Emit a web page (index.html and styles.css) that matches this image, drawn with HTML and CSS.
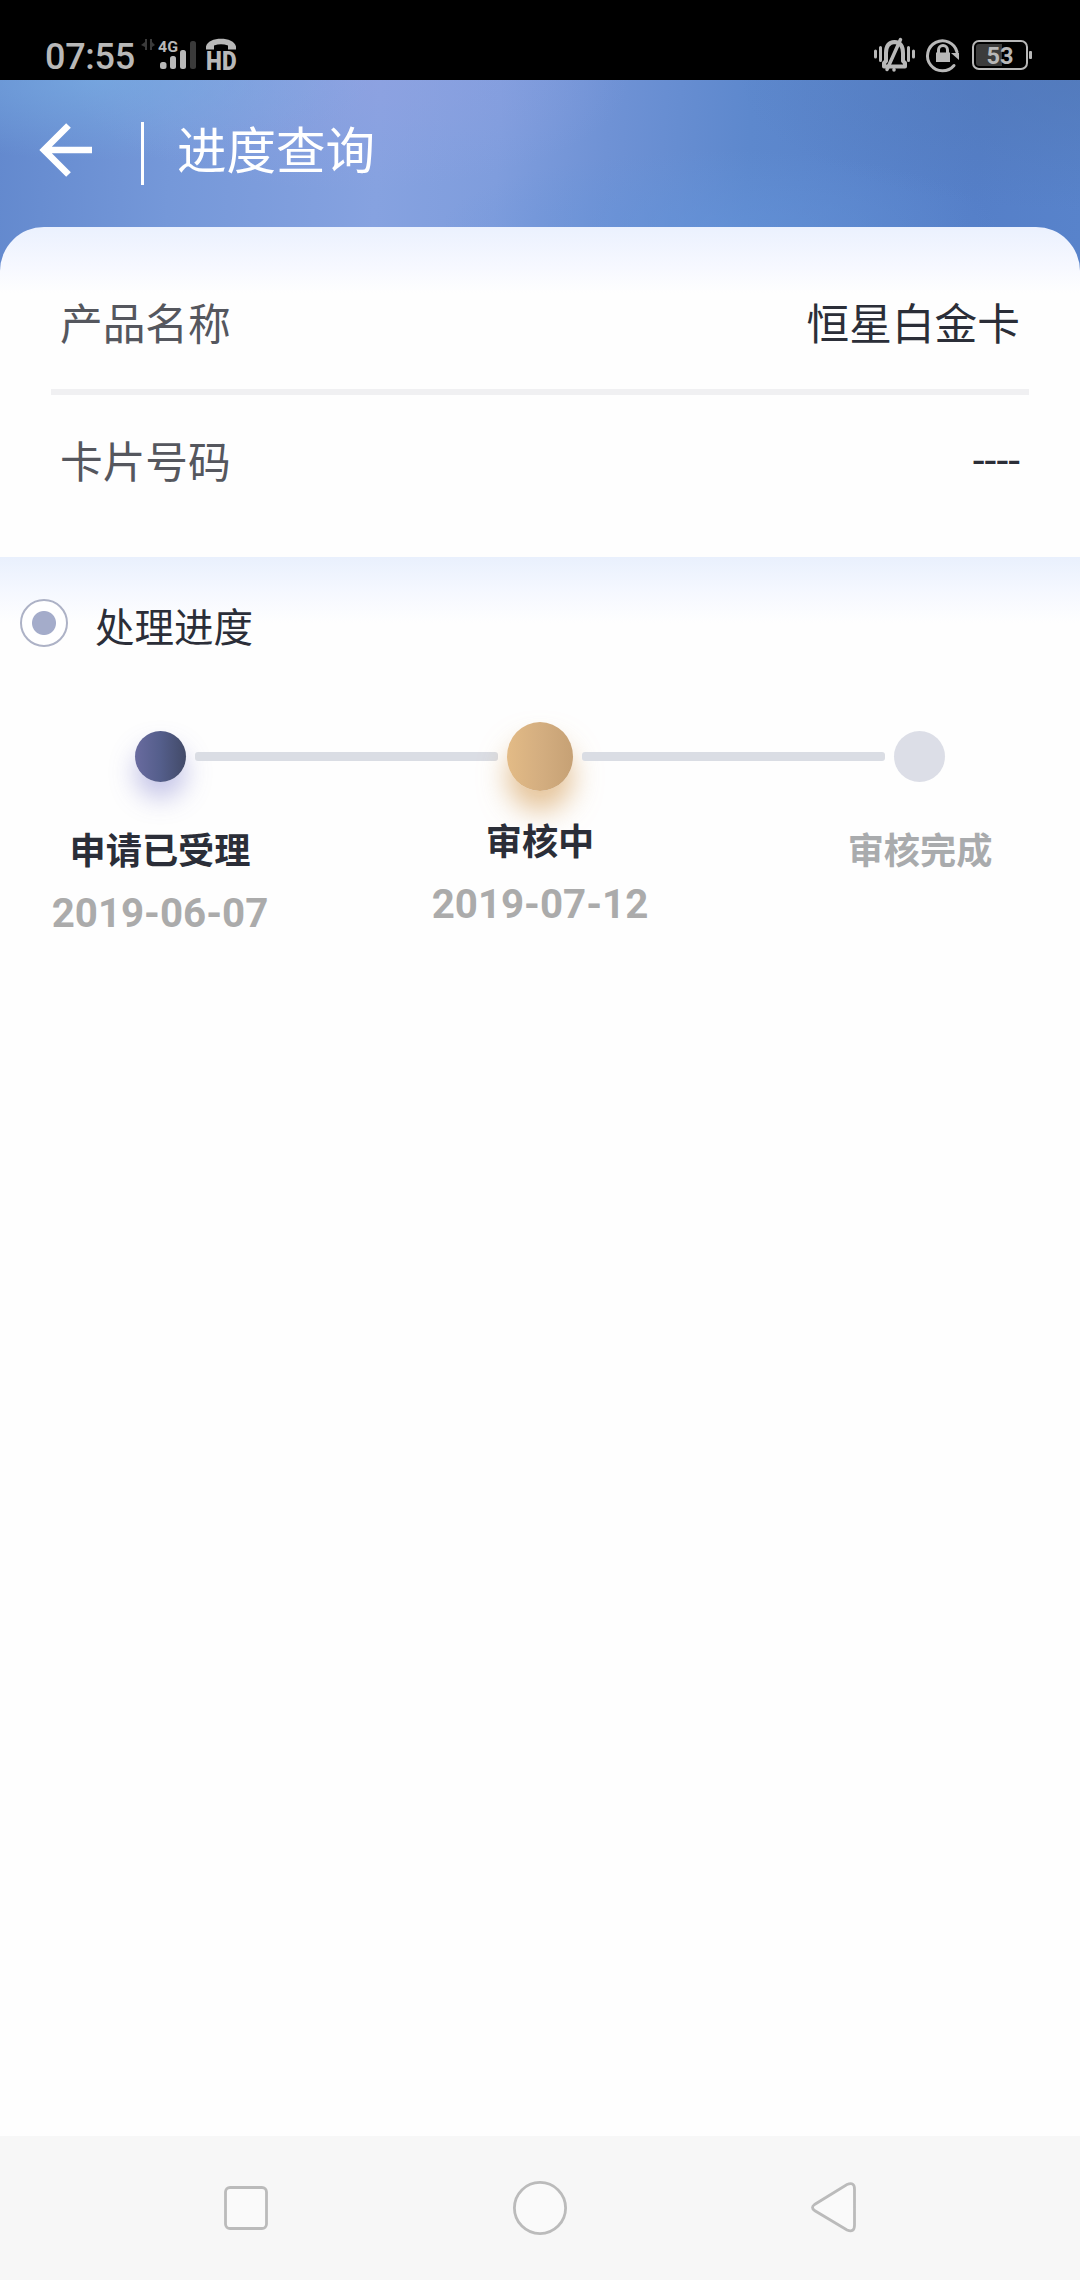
FILE: index.html
```html
<!DOCTYPE html>
<html lang="zh-CN">
<head>
<meta charset="utf-8">
<title>进度查询</title>
<link rel="stylesheet" href="styles.css">
</head>
<body>
<div class="screen">
  <div class="status">
    <span class="clock">07:55</span>
    <svg class="signal" width="104" height="40" viewBox="138 35 104 40">
      <path d="M147 39v11h-2v-3l-4-2 4-3v-3zM150 39h2v3l3 3-3 2v3h-2z" fill="#3a3a3a"/>
      <text x="158" y="51.500" class="net" textLength="20" lengthAdjust="spacingAndGlyphs">4G</text>
      <rect x="160" y="62" width="6.500" height="7" rx="2.500"/>
      <rect x="170" y="56" width="6" height="13" rx="2.500"/>
      <rect x="180" y="50" width="6" height="19" rx="2.500"/>
      <rect x="190" y="41" width="6" height="28" rx="2.500" fill="#3a3a3a"/>
      <path d="M206 49.500v-3c2-10.500 28-10.500 30 0v3h-8v-4q-7-2.500-14 0v4z"/>
      <text x="206" y="70" class="hd" textLength="30.500" lengthAdjust="spacingAndGlyphs">HD</text>
    </svg>
    <svg class="system" width="164" height="44" viewBox="870 34 164 44">
      <g fill="none" stroke="#b8b8b8" stroke-width="3" stroke-linecap="round">
        <path d="M875.500 51v6M880.500 47.500v13M908.500 47.500v13M913.500 51v6"/>
        <path d="M884 66.500v-3.500l2-2v-8q0-10.500 8.500-11Q903 42.500 903 53v8l2 2v3.500z" stroke-width="4" stroke-linejoin="round"/>
        <path d="M887 69.500L900.500 39.500M894 69.500v.5" stroke-width="3.500"/>
        <path d="M957 52A15 15 0 1 0 954 65.500"/>
      </g>
      <path d="M951 53h8v7zM936 52.500h14v9.500h-14z"/>
      <path d="M938.500 53v-3a4.500 4.500 0 0 1 9 0v3" fill="none" stroke="#b8b8b8" stroke-width="3"/>
      <rect x="973" y="41" width="54" height="28" rx="6" fill="none" stroke="#b8b8b8" stroke-width="2"/>
      <path d="M979 44h23v22h-23q-3 0-3-3v-16q0-3 3-3z" fill="#3c3c3c"/>
      <rect x="1029" y="51" width="3" height="8" rx="1"/>
      <text x="986.500" y="64.300" class="charge" textLength="27" lengthAdjust="spacingAndGlyphs">53</text>
    </svg>
  </div>

  <header class="header">
    <svg class="back" width="54" height="56" viewBox="39 122 54 56">
      <path d="M92 150H44M68.500 125.500L44 150L68.500 174.500" fill="none" stroke="#fff" stroke-width="6.600"/>
    </svg>
    <span class="separator"></span>
    <h1 class="title">进度查询</h1>
  </header>

  <section class="card">
    <div class="row"><span>产品名称</span><span class="value">恒星白金卡</span></div>
    <div class="row"><span>卡片号码</span><span class="value empty">----</span></div>
  </section>

  <main class="progress">
    <h2 class="heading"><span class="bullet"></span><span class="caption">处理进度</span></h2>
    <div class="steps">
      <div class="track">
        <span class="dot done"></span>
        <span class="line"></span>
        <span class="dot current"></span>
        <span class="line"></span>
        <span class="dot"></span>
      </div>
      <div class="labels">
        <div class="step"><b>申请已受理</b><time>2019-06-07</time></div>
        <div class="step active"><b>审核中</b><time>2019-07-12</time></div>
        <div class="step pending"><b>审核完成</b></div>
      </div>
    </div>
  </main>

  <nav class="nav">
    <svg width="60" height="60" viewBox="-30 -30 60 60"><rect x="-20.500" y="-20.500" width="41" height="41" rx="4.500"/></svg>
    <svg width="60" height="60" viewBox="-30 -30 60 60"><circle r="25.600"/></svg>
    <svg width="60" height="60" viewBox="804 2178 60 60"><path d="M814.500 2204.500L847 2184.500q7.500-3 7.500 4.500v36q0 8-7.500 5L814.500 2210.500q-4-3 0-6z"/></svg>
  </nav>
</div>
</body>
</html>
```
FILE: styles.css
```css
* { box-sizing: border-box; }

body {
  margin: 0;
  background: #fefefe;
  color: #2b2e38;
  font-family: Roboto, "Noto Sans CJK SC", sans-serif;
}

.screen {
  display: flex;
  flex-direction: column;
  width: 1080px;
  height: 2280px;
}

/* System status bar */
.status {
  display: flex;
  align-items: flex-start;
  height: 80px;
  padding: 34px 46px 0 45px;
  background: #000;
  color: #b8b8b8;
}

.status svg { fill: #b8b8b8; flex: none; }
.clock { width: 93px; padding-top: 1px; font-size: 36px; font-weight: 500; line-height: 45px; letter-spacing: -0.3px; }
.signal { margin-top: 1px; }
.system { margin-left: auto; }
.net { font-size: 15px; font-weight: 700; }
.hd { font-size: 26px; font-weight: 900; }
.charge { font-size: 24px; font-weight: 700; }

/* Blue header, continues behind the rounded card corners */
.header {
  display: flex;
  align-items: flex-start;
  height: 191px;
  padding: 42px 39px 0;
  background:
    radial-gradient(ellipse 270px 80px at 100px 0, rgba(120, 172, 226, .7), transparent),
    radial-gradient(ellipse 280px 110px at 350px 0, rgba(146, 162, 226, .6), transparent),
    radial-gradient(ellipse 280px 80px at 720px 150px, rgba(101, 148, 218, .6), transparent),
    radial-gradient(ellipse 340px 130px at 1080px 0, rgba(80, 118, 180, .6), transparent),
    linear-gradient(93deg, #6389ce 0, #7598d9 16%, #86a2e0 35%, #7f9ddd 46%, #6f92d5 56%, #5d88cd 69%, #557fc8 90%, #5883cb 100%);
  color: #fff;
}

.separator { width: 3px; height: 63px; margin-left: 48px; background: #fff; }
.title { margin: -6px 0 0 33px; font-size: 49.500px; font-weight: 400; line-height: 72px; }

/* Card details */
.card {
  height: 330px;
  margin-top: -44px;
  padding: 30px 51px 0;
  border-radius: 44px 44px 0 0;
  background: linear-gradient(#ebf1fe, #f6f8ff 38px, #fefefe 66px);
}

.row {
  display: flex;
  justify-content: space-between;
  height: 132px;
  padding: 2px 9px 0;
  color: #55575e;
  font-size: 42.700px;
  line-height: 132px;
}

.row + .row { height: 138px; border-top: 6px solid #f0f0f2; }
.value { color: #2b2e38; }
.value.empty { line-height: 126px; }

/* Processing progress */
.progress {
  flex: 1;
  background: linear-gradient(#e9f0fd, #f5f8ff 34px, #fefefe 66px);
}

.heading {
  display: flex;
  align-items: center;
  gap: 27px;
  height: 60px;
  margin: 0;
  padding: 0 20px;
  margin-top: 40px;
  font-size: 39.500px;
  font-weight: 400;
}

.caption { padding-bottom: 6px; }

.bullet {
  width: 48px;
  height: 48px;
  margin-top: -8px;
  border: 2px solid #adb2c6;
  border-radius: 50%;
  background: radial-gradient(circle, #a4acca 11.500px, #fff 12.500px);
}

.steps { padding-top: 65px; }
.track { display: flex; align-items: center; gap: 9px; height: 69px; padding: 0 135px; }

.dot { flex: none; width: 51px; height: 51px; border-radius: 50%; background: #dcdee7; }
.dot.done { background: linear-gradient(90deg, #696b9f, #545e8b 50%, #424a68); box-shadow: 0 16px 26px rgba(92, 92, 190, .36); }
.dot.current { width: 66px; height: 69px; background: linear-gradient(90deg, #e3bb86, #d4ae80 50%, #c6a175); box-shadow: 0 20px 28px rgba(214, 160, 90, .62); }
.line { flex: 1; height: 9px; border-radius: 3px; background: #dadde4; }

.labels { display: flex; justify-content: space-between; padding: 31px 10px 0; }
.step { display: flex; flex-direction: column; align-items: center; width: 300px; }
.step.active { margin-top: -9px; }
.step b { font-size: 36.200px; font-weight: 700; line-height: 60px; }
.step time { color: #ababab; font-size: 40.300px; font-weight: 700; line-height: 63px; }
.step.pending { color: #a9abad; }

/* System navigation */
.nav {
  display: flex;
  align-items: center;
  justify-content: space-between;
  height: 144px;
  padding: 0 216px;
  background: #f7f7f7;
}

.nav svg { fill: #fafafa; stroke: #bbb; stroke-width: 2.800px; }
```
